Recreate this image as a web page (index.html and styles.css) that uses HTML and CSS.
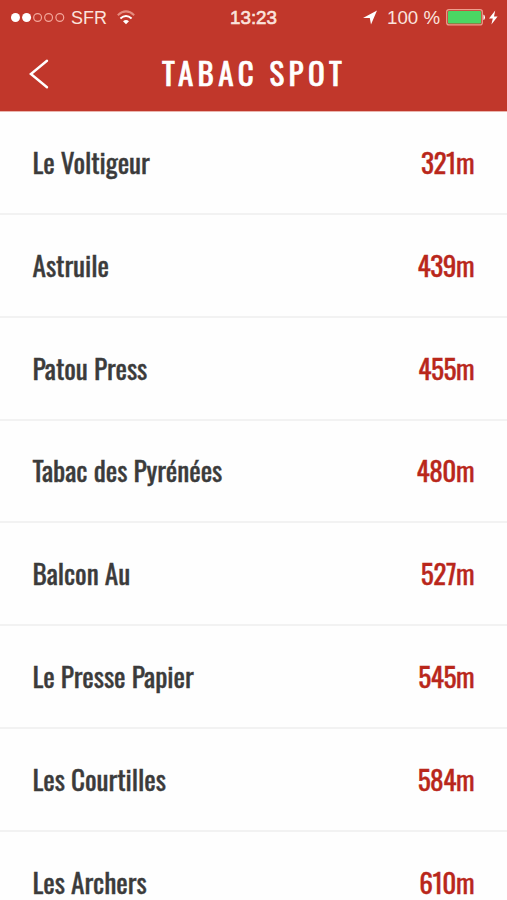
FILE: index.html
```html
<!DOCTYPE html>
<html lang="fr">
<head>
  <meta charset="UTF-8">
  <title>Tabac Spot</title>
  <link rel="stylesheet" href="styles.css">
</head>
<body>
  <header class="header">
    <div class="status">
      <div class="status-left">
        <svg class="signal" width="54" height="12" viewBox="0 0 54 12">
          <circle class="on" cx="4.5" cy="5.5" r="4.5"/>
          <circle class="on" cx="15.6" cy="5.5" r="4.5"/>
          <circle cx="26.6" cy="5.5" r="3.9"/>
          <circle cx="37.6" cy="5.5" r="3.9"/>
          <circle cx="48.8" cy="5.5" r="3.9"/>
        </svg>
        <svg class="label" width="36" height="24"><text x="0" y="18" textLength="36" lengthAdjust="spacingAndGlyphs">SFR</text></svg>
        <svg class="wifi" width="20" height="16" viewBox="0 0 20 16">
          <path class="faint" d="M0.8 5.2Q9 -2.4 17.2 5.2"/>
          <path d="M3.4 8.5Q9 3.6 14.6 8.5"/>
          <path class="fill" d="M6 11.2Q9 8.8 12 11.2L9 14.2Z"/>
        </svg>
      </div>
      <svg class="label clock" width="47" height="24"><text x="-1" y="18" textLength="47" lengthAdjust="spacingAndGlyphs">13:23</text></svg>
      <div class="status-right">
        <svg class="arrow" width="16" height="16" viewBox="0 0 16 16"><path d="M16 0.5L10 14.5L8.8 8L2 8Z"/></svg>
        <svg class="label" width="54" height="24"><text x="1" y="18" textLength="53" lengthAdjust="spacingAndGlyphs">100 %</text></svg>
        <svg class="battery" width="40" height="18" viewBox="0 0 40 18">
          <rect class="shell" x="0.7" y="0.7" width="35.6" height="15.2" rx="2.2"/>
          <rect class="level" x="2" y="2.1" width="33" height="12.4" rx="0.8"/>
          <path class="cap" d="M37.4 5.5Q39 5.9 39 8.3Q39 10.7 37.4 11.1Z"/>
        </svg>
        <svg class="bolt" width="9" height="16" viewBox="0 0 9 16"><path d="M6.2 0.5L0 8.4H3.8L2.4 14.6L8.6 6.5H5Z"/></svg>
      </div>
    </div>
    <div class="navbar">
      <svg class="back" width="20" height="30" viewBox="0 0 20 30"><path d="M18 1.8L1.9 15L18 28.2"/></svg>
      <h1 class="title">TABAC SPOT</h1>
    </div>
  </header>

  <main class="list">
    <div class="row">
      <span class="name">Le Voltigeur</span>
      <span class="distance">321m</span>
    </div>
    <div class="row">
      <span class="name">Astruile</span>
      <span class="distance">439m</span>
    </div>
    <div class="row">
      <span class="name">Patou Press</span>
      <span class="distance">455m</span>
    </div>
    <div class="row">
      <span class="name">Tabac des Pyrénées</span>
      <span class="distance">480m</span>
    </div>
    <div class="row">
      <span class="name">Balcon Au</span>
      <span class="distance">527m</span>
    </div>
    <div class="row">
      <span class="name">Le Presse Papier</span>
      <span class="distance">545m</span>
    </div>
    <div class="row">
      <span class="name">Les Courtilles</span>
      <span class="distance">584m</span>
    </div>
    <div class="row">
      <span class="name">Les Archers</span>
      <span class="distance">610m</span>
    </div>
  </main>
</body>
</html>
```
FILE: styles.css
```css
body {
  margin: 0;
  height: 900px;
  overflow: hidden;
  background: #fefefe;
  font-family: Oswald, Roboto, sans-serif;
}

svg {
  display: block;
  flex: none;
  overflow: visible;
}

.header {
  height: 111px;
  background: #c1372b;
  border-bottom: 1px solid #eab5ae;
}

.status {
  height: 36px;
  display: grid;
  grid-template-columns: 1fr 47px 1fr;
  align-items: center;
  padding: 0 9px 0 11px;
  box-sizing: border-box;
}

.status-left,
.status-right {
  display: flex;
  align-items: center;
}

.status-left {
  gap: 6px;
}

.status-right {
  justify-content: flex-end;
}

.signal circle {
  fill: none;
  stroke: #f3a79b;
  stroke-width: 1.2;
}

.signal .on {
  fill: #fff;
  stroke: none;
}

.label {
  font: 19px "Liberation Sans", Arial, sans-serif;
  fill: #fbe3dd;
}

.clock {
  font-size: 18.5px;
  stroke: #fbe3dd;
  stroke-width: 0.6;
}

.wifi {
  margin-left: 4px;
}

.wifi path {
  fill: none;
  stroke: #fff;
  stroke-width: 2;
}

.wifi .faint {
  stroke: #e58b7e;
}

.wifi .fill {
  fill: #fff;
  stroke: none;
}

.arrow,
.bolt {
  fill: #fff;
}

.arrow {
  margin-right: 9px;
}

.battery {
  margin: 0 3px 0 6px;
}

.shell {
  fill: none;
  stroke: #eda08f;
  stroke-width: 1.2;
}

.level {
  fill: #4bd763;
}

.cap {
  fill: #fff;
}

.navbar {
  height: 75px;
  display: flex;
  align-items: center;
  padding-left: 29px;
}

.title {
  margin: 0 0 2px 113px;
  color: #fff;
  font-size: 31px;
  line-height: 1;
  font-weight: 400;
  letter-spacing: 4.4px;
  -webkit-text-stroke: 0.7px #fff;
}

.back path {
  fill: none;
  stroke: #fff;
  stroke-width: 2.4;
  stroke-linecap: round;
}

.row {
  height: 102.85px;
  box-sizing: border-box;
  display: flex;
  align-items: center;
  justify-content: space-between;
  padding: 0 33px 1px 32.5px;
  border-bottom: 2px solid #f2f2f2;
}

.name,
.distance {
  font-size: 27.3px;
  line-height: 26px;
  font-weight: 400;
}

.name {
  color: #3b3b3b;
  letter-spacing: -0.05px;
  -webkit-text-stroke: 0.4px #3b3b3b;
}

.distance {
  color: #b9271b;
  letter-spacing: -0.5px;
  -webkit-text-stroke: 0.4px #b9271b;
}
```
